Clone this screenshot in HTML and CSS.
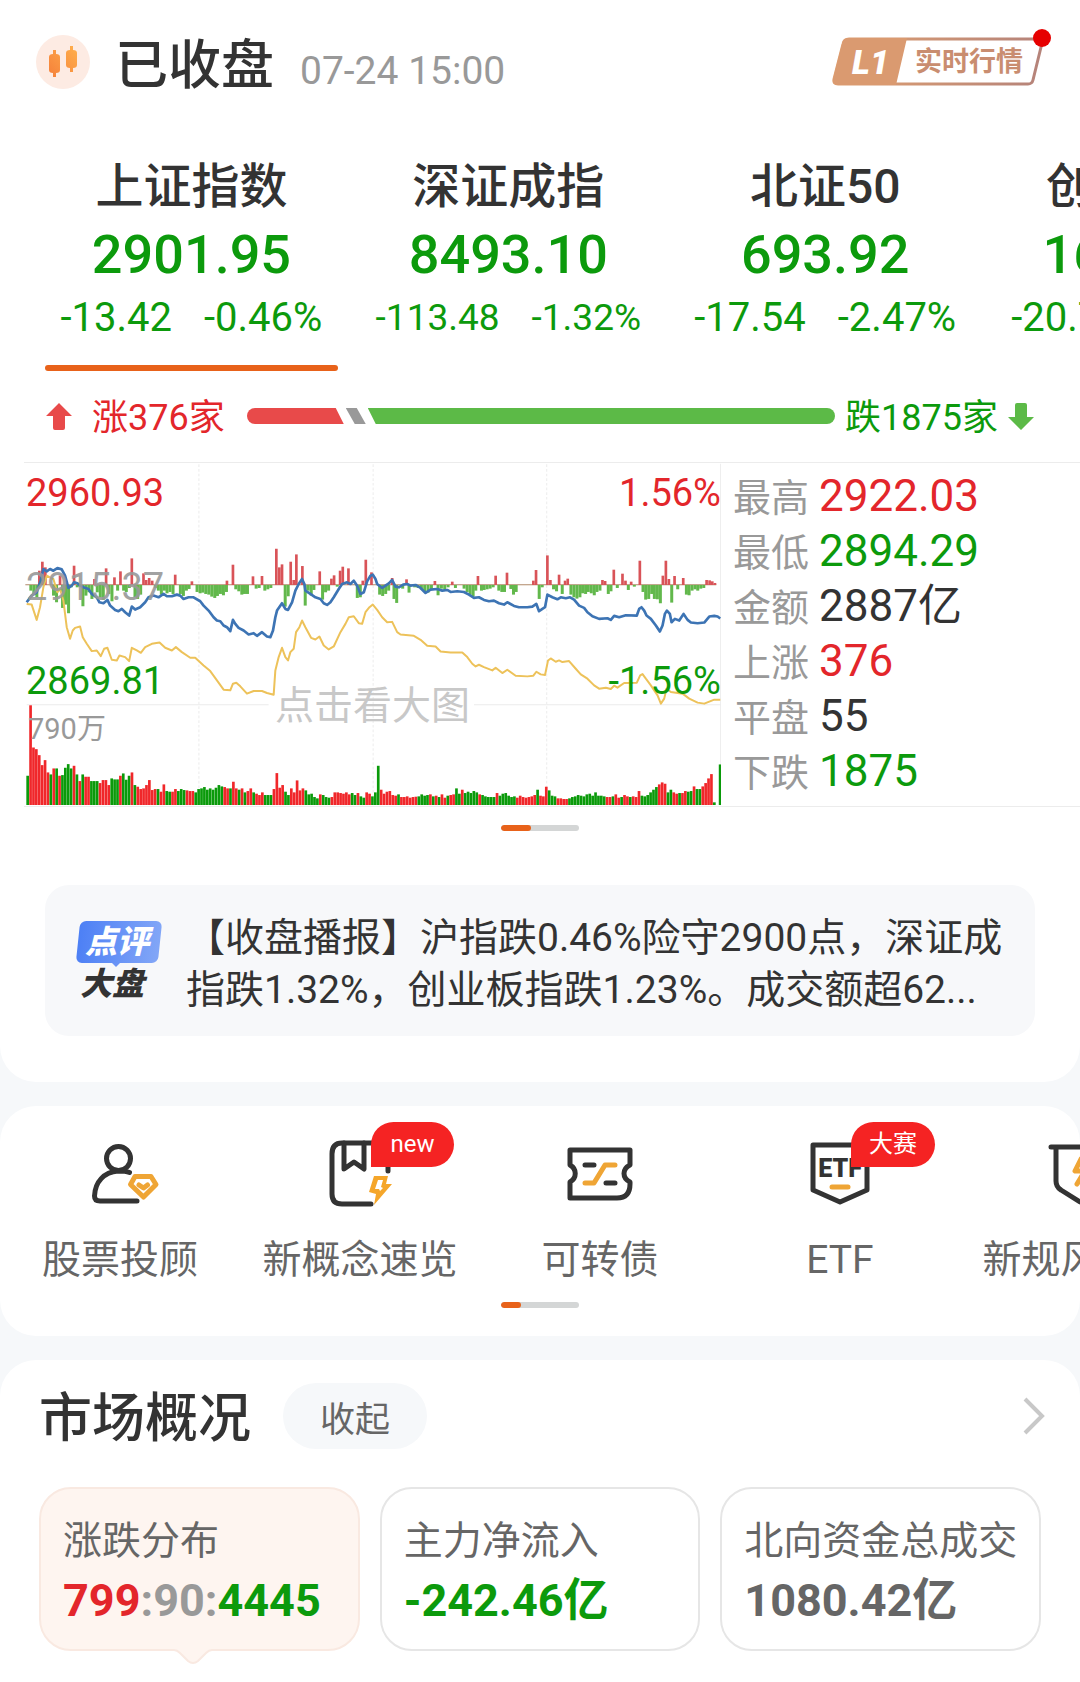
FILE: index.html
```html
<!DOCTYPE html>
<html lang="zh-CN">

<head>
    <meta charset="UTF-8">
    <meta name="viewport" content="width=device-width, initial-scale=1.0">
    <title>行情</title>
    <link rel="stylesheet" href="styles.css">
</head>

<body>
    <!--大盘指数-->
    <section class="panel market">
        <header class="header">
            <svg class="logo" viewBox="0 0 54 54">
                <defs>
                    <linearGradient id="candle" x1="1" y1="0" x2="0" y2="1">
                        <stop offset="0" stop-color="#ffb04d" />
                        <stop offset="1" stop-color="#f5803a" />
                    </linearGradient>
                </defs>
                <circle cx="27" cy="27" r="27" fill="#fdebe3" />
                <path d="M17 15h3v4q4 0 4 3v13q0 3-4 3v4h-3v-4q-4 0-4-3V22q0-3 4-3zM34 11h3v4q4 0 4 3v12q0 3-4 3v4h-3v-4q-4 0-4-3V18q0-3 4-3z" fill="url(#candle)" />
            </svg>
            <h1 class="status">已收盘</h1>
            <time class="time">07-24 15:00</time>
            <a class="level" href="#">
                <svg class="level-bg" viewBox="0 0 212 50">
                    <defs>
                        <linearGradient id="gold">
                            <stop offset="0" stop-color="#e0a070" />
                            <stop offset="1" stop-color="#b5837a" />
                        </linearGradient>
                    </defs>
                    <path d="M17 2H207Q211 2 210 6L201 43Q200 47 196 47H6Q1 47 2 42L11 7Q12 2 17 2Z" fill="#fff" stroke="url(#gold)" stroke-width="3" />
                    <path d="M16 1H75L64 48H6Q0 48 1 42L10 7Q11 1 16 1Z" fill="#da9a70" />
                </svg>
                <b class="level-tag">L1</b>
                <span class="level-text">实时行情</span>
                <i class="dot"></i>
            </a>
        </header>

        <nav class="tabs">
            <button class="tab selected">
                <span class="name">上证指数</span>
                <span class="value">2901.95</span>
                <span class="change"><i>-13.42</i><i>-0.46%</i></span>
            </button>
            <button class="tab">
                <span class="name">深证成指</span>
                <span class="value">8493.10</span>
                <span class="change small"><i>-113.48</i><i>-1.32%</i></span>
            </button>
            <button class="tab">
                <span class="name">北证50</span>
                <span class="value">693.92</span>
                <span class="change"><i>-17.54</i><i>-2.47%</i></span>
            </button>
            <button class="tab">
                <span class="name">创业板指</span>
                <span class="value">1665.51</span>
                <span class="change"><i>-20.71</i><i>-1.23%</i></span>
            </button>
        </nav>

        <!--涨跌家数-->
        <div class="ratio">
            <svg class="arrow" viewBox="0 0 26 27">
                <path d="M13 0L26 13H19V25Q19 27 17 27H9Q7 27 7 25V13H0Z" fill="#e84a4a" />
            </svg>
            <span class="up ratio-up">涨376家</span>
            <div class="ratio-bar">
                <i class="bar-up"></i>
                <i class="bar-flat"></i>
                <i class="bar-down"></i>
            </div>
            <span class="down ratio-down">跌1875家</span>
            <svg class="arrow" viewBox="0 0 26 27">
                <path d="M13 27L0 14H7V2Q7 0 9 0H17Q19 0 19 2V14H26Z" fill="#5cba47" />
            </svg>
        </div>

        <div class="board">
            <div class="chart">
                <svg class="chart-svg" viewBox="72 36 2088 1032" preserveAspectRatio="none">
                    <g fill="none" stroke="#ececec" stroke-width="3">
                        <path d="M80 763H805M1420 763H2160M2159 38V1066" />
                        <path d="M596 40V1065M1118 40V1065M1638 40V1065" stroke-dasharray="8 6" />
                    </g>
                    <g id="bars"></g>
                    <polyline id="avg" fill="none" stroke="#edc25a" stroke-width="6" stroke-linejoin="round" />
                    <polyline id="price" fill="none" stroke="#3d74b4" stroke-width="8" stroke-linejoin="round" />
                    <g id="volume"></g>
                </svg>
                <span class="mark up left top">2960.93</span>
                <span class="mark up right top">1.56%</span>
                <span class="mark gray left middle">2915.37</span>
                <span class="mark down left low">2869.81</span>
                <span class="mark down right low">-1.56%</span>
                <span class="mark gray vol">790万</span>
                <span class="mark tip">点击看大图</span>
            </div>
            <dl class="stats">
                <div><dt>最高</dt><dd class="up">2922.03</dd></div>
                <div><dt>最低</dt><dd class="down">2894.29</dd></div>
                <div><dt>金额</dt><dd>2887亿</dd></div>
                <div><dt>上涨</dt><dd class="up">376</dd></div>
                <div><dt>平盘</dt><dd>55</dd></div>
                <div><dt>下跌</dt><dd class="down">1875</dd></div>
            </dl>
        </div>
        <div class="pager"><i class="wide"></i></div>

        <a class="news" href="#">
            <span class="news-logo">
                <b class="bubble">点评</b>
                <b class="word">大盘</b>
            </span>
            <p class="news-text">【收盘播报】沪指跌0.46%险守2900点，深证成指跌1.32%，创业板指跌1.23%。成交额超62...</p>
        </a>
    </section>

    <!--快捷入口-->
    <section class="panel entry">
        <nav class="entries">
            <a class="item" href="#">
                <svg class="icon" viewBox="0 0 80 80">
                    <circle cx="38.5" cy="24.5" r="12" />
                    <path d="M49.500 38.500C46 37 42 37 38 37C24 38 15 48 14.500 62Q14.500 67 20 67H57" />
                    <g class="accent">
                        <path d="M55 42.500H71L76 50.500L63.500 63L50.500 50.500Z" />
                        <path d="M59 51L63.500 54L67.500 51" />
                    </g>
                </svg>
                <span>股票投顾</span>
            </a>
            <a class="item" href="#">
                <svg class="icon" viewBox="0 0 80 80">
                    <path d="M68 37V20Q68 9 58 9H22Q12 9 12 20V60Q12 70 22 70H51" />
                    <path d="M24 9V35L34 28L44 35V9" />
                    <path class="solid" d="M54 42H68L66 50H72L54 71L56 60L49 58Z" />
                    <path class="hole" d="M58 46H63L61 53L63 54L60 57L59 55H55Z" />
                </svg>
                <em class="badge">new</em>
                <span>新概念速览</span>
            </a>
            <a class="item" href="#">
                <svg class="icon" viewBox="0 0 80 80">
                    <path d="M10 16H70V31C62 35 62 44 70 48V50Q70 64 57 64H10V48C17 44 17 35 10 31Z" />
                    <path d="M25 31H34M46 49H55" />
                    <path class="accent" d="M25 49H34L45 31H55" />
                </svg>
                <span>可转债</span>
            </a>
            <a class="item" href="#">
                <svg class="icon" viewBox="0 0 80 80">
                    <path d="M13 11H67V56L40 68L13 56Z" />
                    <text x="40" y="43" text-anchor="middle">ETF</text>
                    <path class="accent" d="M32 53H48" />
                </svg>
                <em class="badge">大赛</em>
                <span>ETF</span>
            </a>
            <a class="item" href="#">
                <svg class="icon" viewBox="0 0 80 80">
                    <path d="M11 13H69M16 13V47Q16 53 21 56L40 68L59 56Q64 53 64 47V13" />
                    <path class="accent" d="M41 25L35 37H45L37 50" />
                </svg>
                <span>新规风险股</span>
            </a>
        </nav>
        <div class="pager"><i></i></div>
    </section>

    <!--市场概况-->
    <section class="panel overview">
        <div class="overview-head">
            <h2>市场概况</h2>
            <button class="fold">收起</button>
            <a class="more" href="#" aria-label="更多">
                <svg viewBox="0 0 22 38">
                    <path d="M2 2L19 19L2 36" fill="none" stroke="#c8c8c8" stroke-width="4" />
                </svg>
            </a>
        </div>
        <div class="cards">
            <a class="card selected" href="#">
                <span>涨跌分布</span>
                <b><i class="up">799</i><i class="gray">:90:</i><i class="down">4445</i></b>
                <svg class="corner" viewBox="0 0 38 16">
                    <path d="M0 0V1Q3 1 6 4L14 12Q19 16 24 12L32 4Q35 1 38 1V0Z" fill="#fef5f0" />
                    <path d="M0 1Q3 1 6 4L14 12Q19 16 24 12L32 4Q35 1 38 1" fill="none" stroke="#f9e9e1" stroke-width="2" />
                </svg>
            </a>
            <a class="card" href="#">
                <span>主力净流入</span>
                <b class="down">-242.46亿</b>
            </a>
            <a class="card" href="#">
                <span>北向资金总成交</span>
                <b>1080.42亿</b>
            </a>
        </div>
    </section>

    <script src="chart.js"></script>
</body>

</html>
```

FILE: styles.css
```css
* {
    margin: 0;
    padding: 0;
    box-sizing: border-box;
}

body {
    display: flex;
    flex-direction: column;
    gap: 24px;
    min-height: 100vh;
    background: #f6f8fa;
    color: #333;
    font-family: Roboto, "Noto Sans CJK SC", sans-serif;
    overflow-x: hidden;
}

a {
    color: inherit;
    text-decoration: none;
}

button {
    border: none;
    background: none;
    color: inherit;
    font-family: inherit;
    cursor: pointer;
}

i,
em {
    font-style: normal;
}

.up {
    color: #e3262b;
}

.down {
    color: #0c9a0c;
}

.gray {
    color: #999;
}

.panel {
    background: #fff;
    border-radius: 36px;
    overflow: hidden;
}

/* 大盘指数 */
.market {
    padding: 34px 0 46px;
    border-radius: 0 0 36px 36px;
}

.header {
    display: flex;
    align-items: baseline;
    height: 56px;
    padding: 0 36px;
    line-height: 64px;
}

.logo {
    align-self: center;
    width: 54px;
    height: 54px;
}

.status {
    margin: 0 26px 0 25px;
    font-size: 53px;
    font-weight: 500;
}

.time {
    color: #999;
    font-size: 39px;
}

.level {
    position: relative;
    display: flex;
    align-self: center;
    align-items: center;
    gap: 26px;
    width: 212px;
    height: 50px;
    margin-left: auto;
    padding-left: 20px;
    line-height: 50px;
}

.level-bg {
    position: absolute;
    left: 0;
    top: 0;
    width: 212px;
    height: 50px;
}

.level-tag {
    position: relative;
    color: #fff;
    font-size: 34px;
    font-weight: 900;
    font-style: italic;
}

.level-text {
    position: relative;
    color: #c98d70;
    font-size: 27px;
    font-weight: 700;
}

.dot {
    position: absolute;
    right: -7px;
    top: -8px;
    width: 18px;
    height: 18px;
    border-radius: 50%;
    background: #e60000;
}

.tabs {
    display: flex;
    gap: 24px;
    margin-top: 67px;
    padding-left: 45px;
    overflow: hidden;
}

.tab {
    display: flex;
    flex: 0 0 28.3%;
    flex-direction: column;
    align-items: center;
    white-space: nowrap;
    border-bottom: 6px solid transparent;
    padding-bottom: 23px;
    position: relative;
}

.tab.selected::after {
    content: "";
    position: absolute;
    left: 0;
    right: 0;
    bottom: -6px;
    height: 6px;
    border-radius: 3px;
    background: #e8621a;
}

.tab .name {
    font-size: 48px;
    font-weight: 500;
    line-height: 60px;
}

.tab .value {
    margin-top: 8px;
    color: #0c9a0c;
    font-size: 54px;
    font-weight: 500;
    line-height: 60px;
}

.tab .change {
    display: flex;
    gap: 32px;
    margin-top: 9px;
    color: #0c9a0c;
    font-size: 40px;
    line-height: 48px;
}

.tab .change.small {
    font-size: 37px;
}

.ratio {
    display: flex;
    align-items: center;
    height: 48px;
    margin-top: 21px;
    padding: 0 46px;
    font-size: 36px;
    line-height: 44px;
}

.arrow {
    width: 26px;
    height: 27px;
}

.ratio-up,
.ratio-down {
    padding-top: 4px;
}

.ratio-up {
    margin: 0 22px 0 20px;
}

.ratio-down {
    margin: 0 10px;
}

.ratio-bar {
    display: flex;
    flex: 1;
    height: 16px;
    border-radius: 8px;
    overflow: hidden;
}

.bar-up {
    flex: 97;
    background: #e84a4a;
    clip-path: polygon(0 0, calc(100% - 8px) 0, 100% 100%, 0 100%);
}

.bar-flat {
    flex: 0 0 20px;
    margin-left: 2px;
    background: #999;
    clip-path: polygon(0 0, 11px 0, 100% 100%, 9px 100%);
}

.bar-down {
    flex: 467;
    margin-left: 2px;
    background: #5cba47;
    clip-path: polygon(0 0, 100% 0, 100% 100%, 8px 100%);
}

/* 分时图 */
.board {
    display: flex;
    margin: 22px 0 0 24px;
    border-top: 1px solid #ececec;
    border-bottom: 1px solid #ececec;
}

.chart {
    position: relative;
    flex: 0 0 66%;
    height: 343px;
}

.chart-svg {
    display: block;
    width: 100%;
    height: 100%;
}

.mark {
    position: absolute;
    font-size: 38px;
    line-height: 44px;
}

.left {
    left: 2px;
}

.right {
    right: 0;
}

.top {
    top: 8px;
}

.middle {
    top: 102px;
    opacity: .9;
}

.low {
    top: 196px;
}

.vol {
    left: 4px;
    top: 244px;
    font-size: 29px;
}

.tip {
    left: 0;
    right: 0;
    top: 221px;
    color: #c8c8c8;
    font-size: 39px;
    text-align: center;
}

.stats {
    flex: 1;
    padding: 6px 0 0 12px;
}

.stats div {
    display: flex;
    align-items: baseline;
    gap: 10px;
    height: 55px;
    line-height: 55px;
}

.stats dt {
    color: #999;
    font-size: 38px;
}

.stats dd {
    font-size: 44px;
}

.pager {
    width: 78px;
    height: 6px;
    margin: 18px auto 0;
    border-radius: 3px;
    background: #d4d6d6;
    overflow: hidden;
}

.pager i {
    display: block;
    width: 20px;
    height: 6px;
    border-radius: 3px;
    background: #e8621a;
}

.pager .wide {
    width: 30px;
}

.news {
    display: flex;
    align-items: center;
    gap: 24px;
    margin: 54px 45px 0;
    padding: 21px 28px 20px 31px;
    border-radius: 24px;
    background: #f7f8fa;
}

.news-logo {
    display: flex;
    flex: 0 0 86px;
    flex-direction: column;
    gap: 4px;
    font-style: italic;
    text-align: center;
}

.bubble {
    position: relative;
    z-index: 0;
    padding-right: 4px;
    color: #fff;
    font-size: 32px;
    font-weight: 900;
    line-height: 42px;
}

.bubble::before {
    content: "";
    position: absolute;
    left: 2px;
    right: 2px;
    top: 0;
    bottom: 0;
    z-index: -1;
    border-radius: 6px;
    background: linear-gradient(90deg, #4d80f5, #82a6f7);
    transform: skewX(-6deg);
}

.bubble::after {
    content: "";
    position: absolute;
    left: 36px;
    bottom: -4px;
    border: 4px solid transparent;
    border-top-color: #6a93f6;
    border-bottom: none;
}

.word {
    padding-right: 14px;
    font-size: 32px;
    font-weight: 900;
    line-height: 34px;
}

.news-text {
    flex: 1;
    padding-top: 6px;
    font-size: 39px;
    line-height: 52px;
}

/* 快捷入口 */
.entry {
    padding: 28px 0;
}

.entries {
    display: flex;
}

.item {
    position: relative;
    display: flex;
    flex: 0 0 22.2222%;
    flex-direction: column;
    align-items: center;
    gap: 22px;
    color: #666;
    font-size: 39px;
    line-height: 48px;
    white-space: nowrap;
}

.icon {
    width: 80px;
    height: 80px;
    fill: none;
    stroke: #333;
    stroke-width: 5;
    stroke-linecap: round;
    stroke-linejoin: round;
}

.icon .accent {
    stroke: #efa535;
}

.icon .solid {
    fill: #f5a62a;
    stroke: none;
}

.icon .hole {
    fill: #fff;
    stroke: none;
}

.icon text {
    fill: #333;
    stroke: none;
    font-size: 25px;
    font-weight: 900;
}

.badge {
    position: absolute;
    left: 50%;
    top: -12px;
    min-width: 83px;
    margin-left: 11px;
    padding: 0 18px;
    border-radius: 23px 23px 23px 0;
    background: #f52323;
    color: #fff;
    font-size: 24px;
    line-height: 45px;
    text-align: center;
}

/* 市场概况 */
.overview {
    flex: 1;
    padding: 23px 39px 18px;
    border-radius: 36px 36px 0 0;
}

.overview-head {
    display: flex;
    align-items: center;
    height: 66px;
}

.overview-head h2 {
    padding-top: 6px;
    font-size: 53px;
    font-weight: 500;
    line-height: 60px;
}

.fold {
    width: 144px;
    height: 66px;
    margin-left: 32px;
    border-radius: 33px;
    background: #f6f8fa;
    color: #666;
    font-size: 35px;
}

.more {
    width: 22px;
    height: 38px;
    margin-left: auto;
    margin-right: -4px;
}

.more svg {
    display: block;
}

.cards {
    display: grid;
    grid-template-columns: repeat(3, 1fr);
    gap: 20px;
    margin-top: 38px;
}

.card {
    position: relative;
    padding: 28px 0 22px 22px;
    border: 2px solid #e6e6e6;
    border-radius: 32px;
    color: #666;
    white-space: nowrap;
}

.card.selected {
    border-color: #f9e9e1;
    background: #fef5f0;
}

.card span {
    display: block;
    font-size: 39px;
    line-height: 48px;
}

.card b {
    display: block;
    margin-top: 10px;
    font-size: 45px;
    line-height: 52px;
}

.card b.down {
    color: #0c9a0c;
}

.corner {
    position: absolute;
    left: 133px;
    top: 100%;
    width: 38px;
    height: 16px;
}
```

FILE: chart.js
```js
(function () {
    var BASE = 403,
        BOTTOM = 1065,
        STEP = 8.68;

    // 分时线
    var price = '80,455 95,435 110,425 122,390 130,355 140,362 150,355 160,360 172,352 185,356 195,375 205,412 215,405 222,395 232,398 240,405 250,410 265,415 275,430 290,440 298,455 310,458 322,448 330,465 345,478 355,482 365,475 375,485 387,495 395,468 405,477 420,470 435,455 445,440 460,435 475,440 490,430 500,437 515,437 530,432 540,435 550,445 565,440 580,440 600,452 610,465 625,480 640,500 650,510 660,512 670,525 680,530 690,542 698,508 705,520 715,532 730,540 745,552 760,548 770,556 785,545 800,558 810,560 818,540 825,500 830,480 845,458 855,475 863,478 875,455 885,420 895,400 905,385 912,400 915,420 930,430 945,440 960,445 970,458 980,463 990,455 1000,440 1015,415 1025,400 1040,395 1050,400 1060,390 1070,405 1080,430 1090,425 1100,392 1110,375 1117,372 1125,385 1130,400 1145,412 1155,405 1165,398 1175,388 1185,408 1195,410 1208,402 1220,400 1230,405 1245,403 1260,412 1275,427 1290,417 1310,415 1325,420 1340,418 1350,424 1370,422 1390,424 1405,432 1420,442 1435,440 1450,448 1465,452 1480,450 1495,458 1510,462 1520,455 1540,466 1555,470 1580,470 1595,468 1607,460 1615,482 1625,475 1633,470 1640,432 1655,440 1670,446 1680,440 1695,443 1708,440 1720,447 1735,465 1750,472 1760,485 1775,497 1795,505 1820,503 1830,508 1840,496 1855,500 1875,494 1908,495 1915,475 1922,470 1930,480 1937,495 1950,505 1965,525 1977,543 1985,525 1992,490 1998,480 2007,490 2012,515 2022,505 2035,510 2048,490 2060,508 2070,516 2090,518 2110,516 2125,498 2140,496 2150,498 2158,504';
    // 均线
    var avg = '80,460 95,462 110,508 120,470 130,410 140,375 150,380 160,385 172,425 180,415 190,450 200,530 210,565 218,540 225,532 240,528 248,560 260,580 275,602 290,600 302,617 312,595 322,592 335,628 350,630 358,615 375,620 387,632 395,592 410,600 422,607 435,590 455,580 478,576 495,592 515,600 527,590 545,605 570,622 585,622 610,645 630,662 650,690 670,718 690,720 698,700 708,697 720,708 740,730 760,722 785,722 800,728 820,733 825,660 835,620 845,592 855,620 863,630 870,605 880,595 887,545 897,530 905,510 915,530 932,562 945,567 957,558 970,585 985,597 1000,588 1020,545 1035,520 1045,500 1060,497 1075,518 1085,520 1095,485 1107,470 1117,462 1130,478 1145,500 1160,515 1175,514 1190,545 1200,552 1240,556 1260,568 1280,586 1305,588 1320,603 1350,606 1385,606 1400,620 1415,640 1425,648 1435,643 1450,650 1475,660 1485,652 1505,668 1520,658 1545,676 1580,678 1598,676 1607,664 1620,672 1633,674 1642,630 1650,624 1665,634 1675,630 1685,635 1705,632 1725,655 1740,672 1760,685 1780,705 1795,715 1815,712 1830,716 1840,706 1850,712 1870,698 1908,697 1918,675 1925,671 1935,685 1950,705 1970,735 1980,760 1990,745 1997,715 2010,725 2045,730 2065,745 2090,757 2110,760 2140,748 2158,748';

    // 红绿柱 [x, y]
    var rise = [[118, 360], [127, 333], [136, 350], [180, 375], [222, 345], [283, 385], [318, 353], [343, 380], [361, 362], [395, 323], [430, 368], [438, 388], [447, 382], [456, 390], [525, 372], [575, 392], [680, 390], [698, 342], [758, 377], [785, 376], [828, 294], [837, 350], [845, 341], [871, 333], [880, 388], [888, 311], [906, 346], [958, 362], [993, 384], [1001, 374], [1019, 360], [1027, 348], [1044, 353], [1087, 390], [1096, 327], [1113, 365], [1175, 382], [1218, 386], [1303, 391], [1355, 393], [1432, 376], [1485, 375], [1519, 366], [1598, 390], [1606, 358], [1640, 314], [1649, 388], [1675, 372], [1693, 390], [1701, 384], [1805, 388], [1813, 391], [1839, 357], [1865, 369], [1874, 390], [1891, 393], [1917, 330], [1986, 375], [1995, 330], [2004, 385], [2021, 376], [2047, 382], [2117, 388], [2126, 389], [2134, 392], [2142, 397]];
    var fall = [[92, 420], [101, 432], [110, 440], [160, 435], [169, 455], [187, 472], [196, 462], [205, 488], [213, 410], [231, 410], [248, 467], [257, 435], [266, 425], [275, 445], [291, 425], [300, 440], [309, 448], [326, 430], [335, 452], [352, 420], [370, 420], [378, 424], [387, 412], [404, 440], [412, 445], [421, 432], [465, 412], [474, 420], [483, 432], [492, 420], [500, 428], [509, 424], [518, 430], [540, 430], [549, 436], [558, 420], [566, 415], [590, 424], [599, 428], [607, 426], [616, 430], [625, 432], [634, 438], [643, 442], [651, 436], [660, 430], [669, 434], [678, 424], [706, 416], [715, 422], [724, 432], [732, 430], [741, 430], [767, 414], [776, 412], [793, 420], [802, 416], [811, 412], [854, 468], [863, 437], [914, 465], [923, 420], [932, 435], [940, 418], [966, 447], [975, 425], [984, 420], [1010, 408], [1070, 442], [1079, 440], [1137, 432], [1146, 436], [1155, 430], [1164, 420], [1180, 445], [1188, 457], [1206, 414], [1225, 426], [1242, 410], [1252, 412], [1262, 416], [1272, 424], [1282, 426], [1292, 418], [1312, 434], [1322, 414], [1332, 416], [1342, 410], [1364, 412], [1390, 414], [1399, 424], [1408, 432], [1417, 438], [1425, 420], [1442, 420], [1450, 418], [1459, 416], [1468, 414], [1477, 410], [1494, 420], [1503, 424], [1511, 424], [1530, 415], [1538, 432], [1546, 424], [1615, 445], [1624, 410], [1658, 416], [1667, 422], [1684, 430], [1710, 432], [1719, 440], [1728, 444], [1737, 440], [1745, 428], [1754, 430], [1762, 424], [1771, 428], [1780, 434], [1788, 424], [1797, 420], [1822, 430], [1830, 422], [1849, 412], [1882, 418], [1900, 408], [1926, 424], [1934, 447], [1943, 445], [1952, 430], [1960, 445], [1969, 446], [1978, 458], [2012, 456], [2030, 416], [2056, 432], [2064, 434], [2073, 420], [2082, 416], [2090, 420], [2099, 414], [2108, 412]];

    // 成交量 负数为绿
    var volume = [-88, 300, 173, 168, 150, 120, 135, 98, -92, 110, -110, 88, -90, -112, -123, -110, 118, -92, 72, -92, 85, 85, -72, -72, -72, 66, 75, 75, 60, -80, -77, -77, 88, -95, -76, -88, 98, -60, 55, 48, 50, 60, 75, 45, 48, -48, 40, 62, -42, -40, 40, 48, -42, -48, -45, 44, 42, 42, -38, -48,
        -50, -54, -46, -50, -46, -52, -60, -56, 54, 50, -50, 70, 50, -46, 50, -38, 42, 50, -38, 34, 30, 38, -30, -30, -30, 48, 96, 52, 60, -40, -30, 50, 38, 74, 44, 50, -44, -32, -34, -24, -20, 32, -30, -24, -22, 24, 38, 38, 36, 34, 38, 32, -36, -30, 36, -26, -22, 38, 34, -26,
        -38, -118, 46, 34, 40, 42, 30, 28, -32, 24, 24, 26, 22, 24, 25, -26, -32, -28, -30, 32, -26, 28, -24, 32, 22, -28, 30, 32, -50, -34, 46, -36, -40, -36, -42, -38, 32, -30, -26, -24, -24, -24, 36, -28, -34, -36, -28, -24, -26, 22, 28, 24, 22, 24, 26, 30, -46, 28, 26, 55,
        -44, -28, -26, 20, 20, 18, 18, -20, -24, -26, -30, -28, -26, -32, -34, -28, -38, -28, -28, -26, 24, 24, -26, 32, 22, -24, 30, 26, -24, 26, 24, 42, -28, -26, -30, -38, -46, -54, 62, 68, 64, -38, -46, 38, 34, -36, 36, 42, -40, -42, 56, -48, -48, 56, 66, 80, 93, -8, 0, -122];

    function rect(x, y, h, color, w) {
        return '<rect x="' + x.toFixed(1) + '" y="' + y + '" width="' + w + '" height="' + h + '" fill="' + color + '"/>';
    }

    var str = '<path d="M76 402H2146" stroke="#b08a6a" stroke-width="3"/>';
    for (var i = 0; i < rise.length; i++) {
        str += rect(rise[i][0] - 4, rise[i][1], BASE - rise[i][1], '#d95358', 8);
    }
    for (i = 0; i < fall.length; i++) {
        str += rect(fall[i][0] - 4, BASE, fall[i][1] - BASE, '#62b84c', 9);
    }
    document.getElementById('bars').innerHTML = str;

    str = '';
    for (i = 0; i < volume.length; i++) {
        var h = Math.abs(volume[i]);
        str += rect(79 + i * STEP, BOTTOM - h, h, volume[i] > 0 ? '#f0272a' : '#0a9a0a', 8);
    }
    document.getElementById('volume').innerHTML = str;

    document.getElementById('price').setAttribute('points', price);
    document.getElementById('avg').setAttribute('points', avg);
})();
```
